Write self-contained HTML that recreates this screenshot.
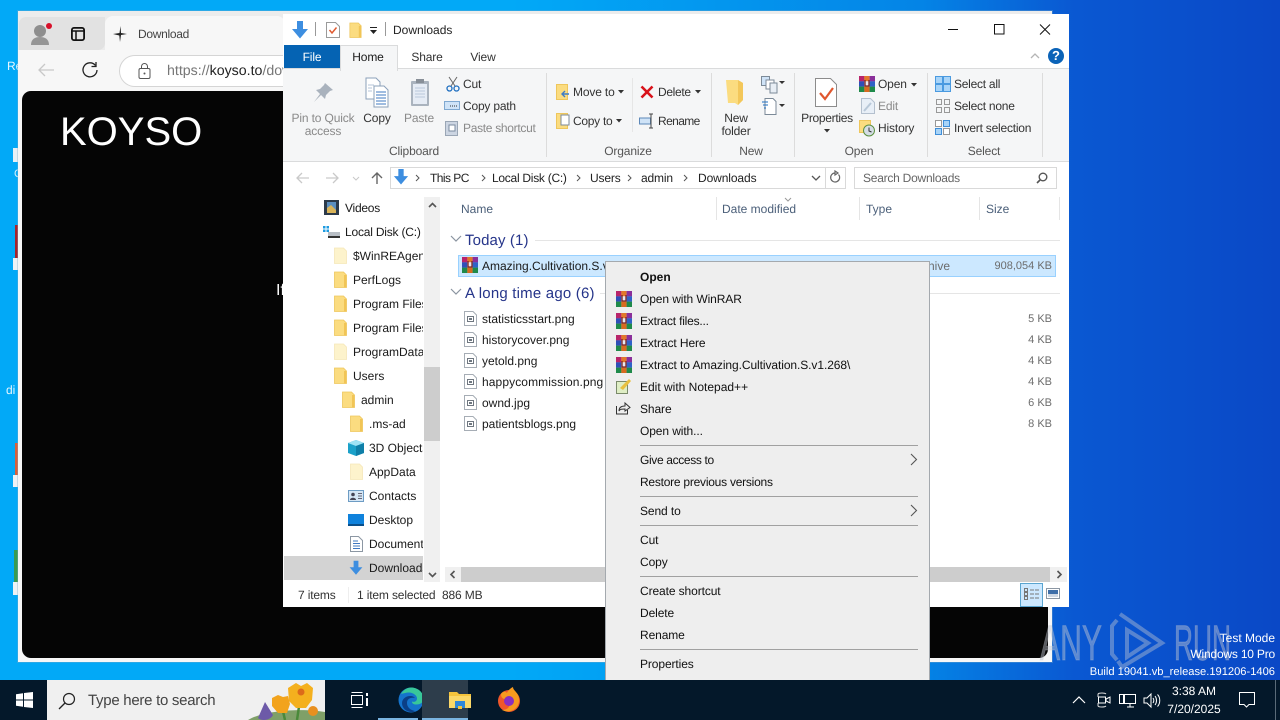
<!DOCTYPE html>
<html><head><meta charset="utf-8"><title>Downloads</title>
<style>
html,body{margin:0;padding:0;width:1280px;height:720px;overflow:hidden}
body{position:relative;background:linear-gradient(90deg,#02a9f7 0%,#02a9f7 40%,#0484e6 72%,#0a58d2 84%,#0a48c6 100%);font:12px/16px "Liberation Sans",sans-serif;color:#1a1a1a;text-rendering:geometricPrecision}
.a{position:absolute}
.t{position:absolute;white-space:nowrap;line-height:16px;font-size:12px;letter-spacing:-.15px}
.f{letter-spacing:0}
.k{font-size:11px;letter-spacing:0}
.c{transform:translateX(-50%)}
.g{color:#8a8a8a}
.r{text-align:right}
svg{position:absolute;overflow:visible}
.sep{position:absolute;background:#dcdcdc;width:1px}
.m{position:absolute;left:640px;white-space:nowrap;color:#111;font-size:12px;letter-spacing:-.1px;line-height:16px}
.ms{position:absolute;left:640px;width:278px;height:1px;background:#a0a0a0}
</style></head><body>
<svg width="0" height="0" style="position:absolute">
<defs>
<symbol id="rar" viewBox="0 0 16 16">
<rect x="0" y="0" width="5.4" height="5.4" fill="#b8246a"/><rect x="5.3" y="0" width="5.4" height="5.4" fill="#e2782a"/><rect x="10.6" y="0" width="5.4" height="5.4" fill="#8a2f9a"/>
<rect x="0" y="5.3" width="5.4" height="5.4" fill="#2f4fb8"/><rect x="5.3" y="5.3" width="5.4" height="5.4" fill="#e8e8f0"/><rect x="10.6" y="5.3" width="5.4" height="5.4" fill="#2f62c8"/>
<rect x="0" y="10.6" width="5.4" height="5.4" fill="#1f8a4a"/><rect x="5.3" y="10.6" width="5.4" height="5.4" fill="#d86a20"/><rect x="10.6" y="10.6" width="5.4" height="5.4" fill="#1f8a4a"/>
<path d="M6 4v6h4V4" fill="none" stroke="#7a2222" stroke-width="1.3"/>
</symbol>
<symbol id="fol" viewBox="0 0 13 17">
<path d="M0.5 1h9l3 3v12.5H.5z" fill="#fbdc80" stroke="#eec65c" stroke-width=".8"/><path d="M10 4v12.5h2.5V4z" fill="#f1c556"/>
</symbol>
<symbol id="fp" viewBox="0 0 13 17">
<path d="M0.5 1h9l3 3v12.5H.5z" fill="#fdf3cc" stroke="#f5e7b8" stroke-width=".8"/>
</symbol>
<symbol id="file" viewBox="0 0 13 15">
<path d="M.5.5h8.5l3.5 3.5v10.500H.5z" fill="#fff" stroke="#a6adb5"/><rect x="3.500" y="5.500" width="6" height="5" fill="#fff" stroke="#6f7780"/><rect x="5" y="7" width="3" height="2" fill="#6f7780"/>
</symbol>
<symbol id="darr" viewBox="0 0 18 20">
<path d="M6 1h6v8h5l-8 9.500L1 9h5z" fill="#3d8ee0"/>
</symbol>
</defs>
</svg>

<!-- desktop left fragments -->
<div class="t f" style="left:7px;top:58px;color:#e6f6ff">Re</div>
<div class="a" style="left:13px;top:148px;width:6px;height:14px;background:#e8f0f5"></div>
<div class="t" style="left:14px;top:166px;color:#d5effc;font-size:11px">C</div>
<div class="a" style="left:15px;top:225px;width:4px;height:35px;background:#a8232a"></div>
<div class="a" style="left:13px;top:258px;width:6px;height:12px;background:#eef2f5"></div>
<div class="t f" style="left:6px;top:382px;color:#e6f6ff">di</div>
<div class="a" style="left:15px;top:443px;width:4px;height:33px;background:#d9603a"></div>
<div class="a" style="left:13px;top:475px;width:6px;height:12px;background:#eef2f5"></div>
<div class="a" style="left:14px;top:550px;width:5px;height:36px;background:#3a9a50"></div>
<div class="a" style="left:13px;top:582px;width:6px;height:13px;background:#eef2f5"></div>

<!-- browser -->
<div class="a" style="left:18px;top:11px;width:1034px;height:651px;background:#f7f7f7;box-shadow:0 0 0 1px rgba(120,170,200,.35)"></div>
<div class="a" style="left:18px;top:11px;width:1034px;height:39px;background:#ececec"></div>
<div class="a" style="left:19px;top:17px;width:86px;height:33px;background:#e2e2e2;border-radius:7px 0 7px 0"></div>
<div class="a" style="left:105px;top:16px;width:180px;height:36px;background:#f7f7f7;border-radius:8px 8px 0 0"></div>
<svg style="left:30px;top:22px" width="22" height="24"><circle cx="10" cy="9" r="6" fill="#8e8e8e"/><path d="M1 23c0-6 4-8 9-8s9 2 9 8z" fill="#969696"/><circle cx="19" cy="4" r="3" fill="#d8102a"/></svg>
<svg style="left:71px;top:27px" width="14" height="14"><rect x=".9" y=".9" width="12.200" height="12.200" rx="2" fill="none" stroke="#111" stroke-width="1.800"/><path d="M1 4h12M5 4v9" stroke="#111" stroke-width="1.500" fill="none"/></svg>
<svg style="left:112px;top:26px" width="16" height="16"><path d="M8.500 0L9 7 15 8 9 9 8 16 7.300 9.500 1 8 7.500 7z" fill="#222"/></svg>
<div class="t" style="left:138px;top:26px;color:#444;letter-spacing:-.3px">Download</div>
<svg style="left:37px;top:62px" width="18" height="16"><path d="M17 8H2M8 2L2 8l6 6" fill="none" stroke="#c8c8c8" stroke-width="1.300"/></svg>
<svg style="left:81px;top:61px" width="18" height="18"><path d="M14.500 4.500A7 7 0 1 0 16 9" fill="none" stroke="#222" stroke-width="1.300"/><path d="M15 1v4.500h-4.500" fill="none" stroke="#222" stroke-width="1.300"/></svg>
<div class="a" style="left:119px;top:55px;width:190px;height:30px;background:#fff;border:1px solid #d5d5d5;border-radius:16px"></div>
<svg style="left:138px;top:63px" width="13" height="16"><rect x="1" y="5.500" width="11" height="10" rx="1.500" fill="none" stroke="#555"/><path d="M3.500 5.500V3.500a3 3 0 0 1 6 0v2" fill="none" stroke="#555"/><circle cx="6.500" cy="10.500" r="1" fill="#555"/></svg>
<div class="t f" style="left:167px;top:63px;color:#777;font-size:14.200px">https://<span style="color:#222">koyso.to</span>/download</div>
<div class="a" style="left:22px;top:91px;width:1026px;height:567px;background:#050505;border-radius:9px"></div>
<div class="t f" style="left:60px;top:112px;color:#fff;font-size:40px;line-height:40px">KOYSO</div>
<div class="t f" style="left:276px;top:283px;color:#fff;font-size:16px">If</div>

<!-- watermark -->
<svg style="left:1030px;top:605px" width="220" height="75">
<g fill="#c4c8d2" fill-opacity=".45" stroke="#c4c8d2" stroke-opacity=".3" stroke-width="1">
<text x="10" y="55" font-family="Liberation Sans" font-size="50" textLength="62" lengthAdjust="spacingAndGlyphs">ANY</text>
<text x="144" y="55" font-family="Liberation Sans" font-size="50" textLength="57" lengthAdjust="spacingAndGlyphs">RUN</text>
</g>
<g fill="none" stroke="#c4c8d2" stroke-opacity=".42" stroke-width="4">
<path d="M90 9L132 38 92 62 88 56"/>
<path d="M97 25L118 38 97 52Z"/>
<path d="M87 15L82 21V49L87 55"/>
</g>
</svg>
<div class="t r f" style="right:5px;top:630px;color:#fff">Test Mode</div>
<div class="t r" style="right:5px;top:646px;color:#fff;letter-spacing:-.2px">Windows 10 Pro</div>
<div class="t r f" style="right:5px;top:664px;color:#fff;font-size:11.150px">Build 19041.vb_release.191206-1406</div>

<!-- explorer -->
<div class="a" style="left:283px;top:14px;width:786px;height:593px;background:#fff"></div>
<svg style="left:291px;top:20px" width="18" height="20"><use href="#darr" width="18" height="20"/></svg>
<div class="sep" style="left:315px;top:22px;height:14px;background:#999"></div>
<svg style="left:326px;top:22px" width="14" height="16"><path d="M.5.500h9l4 4v11H.5z" fill="#fff" stroke="#9a9a9a"/><path d="M3.500 8l2.500 3 4.500-5.500" fill="none" stroke="#e05a30" stroke-width="1.500"/></svg>
<svg style="left:349px;top:22px" width="13" height="16"><use href="#fol" width="13" height="16"/></svg>
<svg style="left:369px;top:27px" width="9" height="8"><path d="M1 .5h7" stroke="#222"/><path d="M1 3h7L4.500 7z" fill="#222"/></svg>
<div class="sep" style="left:385px;top:22px;height:14px;background:#999"></div>
<div class="t f" style="left:393px;top:22px;color:#222">Downloads</div>
<svg style="left:948px;top:24px" width="102" height="12"><path d="M0 5.500h10" stroke="#111"/><rect x="46.500" y=".5" width="9.500" height="9.500" fill="none" stroke="#111"/><path d="M92 .5l10 10M102 .5l-10 10" stroke="#111"/></svg>

<div class="a" style="left:284px;top:45px;width:56px;height:23px;background:#0563b3"></div>
<div class="t c" style="left:312px;top:49px;color:#fff">File</div>
<div class="a" style="left:283px;top:68px;width:786px;height:92px;background:#f5f6f7;border-top:1px solid #dadbdc;border-bottom:1px solid #dadbdc;box-sizing:content-box"></div>
<div class="a" style="left:340px;top:45px;width:56px;height:25px;background:#f5f6f7;border:1px solid #dadbdc;border-bottom:0"></div>
<div class="t c" style="left:368px;top:49px">Home</div>
<div class="t c" style="left:427px;top:49px;color:#333">Share</div>
<div class="t c" style="left:483px;top:49px;color:#333">View</div>
<svg style="left:1030px;top:52px" width="10" height="7"><path d="M1 6l4-4 4 4" fill="none" stroke="#b5b5b5" stroke-width="1.300"/></svg>
<div class="a" style="left:1048px;top:48px;width:16px;height:16px;border-radius:50%;background:#0b63b8;color:#fff;font:bold 13px/16px 'Liberation Sans';text-align:center">?</div>

<!-- ribbon separators -->
<div class="sep" style="left:546px;top:73px;height:84px"></div><div class="sep" style="left:711px;top:73px;height:84px"></div><div class="sep" style="left:794px;top:73px;height:84px"></div><div class="sep" style="left:927px;top:73px;height:84px"></div><div class="sep" style="left:1042px;top:73px;height:84px"></div><div class="sep" style="left:632px;top:78px;height:54px;background:#e6e6e6"></div>

<!-- clipboard -->
<svg style="left:312px;top:82px" width="22" height="22"><path d="M13 1l8 7-3 1-4 4-1 4-4-4-7 7 6-8-4-4 4-1 4-4z" fill="#a9b2bd"/></svg>
<svg style="left:365px;top:77px" width="26" height="32"><path d="M1 1h10l4 4v17H1z" fill="#fff" stroke="#8ba0ba"/><path d="M9 9h10l4 4v17H9z" fill="#fff" stroke="#8ba0ba"/><path d="M11 15h10M11 18h10M11 21h10M11 24h10M11 27h10" stroke="#3f78c2"/><path d="M3 8h6M3 11h4M3 14h4" stroke="#b5c4d8"/></svg>
<svg style="left:410px;top:77px" width="20" height="30"><rect x="1" y="4" width="18" height="25" rx="1" fill="#aab3be"/><rect x="3" y="7" width="14" height="20" fill="#e6ecf5"/><path d="M5 11h10M5 14h10M5 17h10M5 20h10" stroke="#bac8dc"/><rect x="6" y="2" width="8" height="4" fill="#888f98"/></svg>
<div class="t c g" style="left:323px;top:110px">Pin to Quick</div>
<div class="t c g" style="left:323px;top:123px">access</div>
<div class="t c" style="left:377px;top:110px;color:#333">Copy</div>
<div class="t c g" style="left:419px;top:110px">Paste</div>
<svg style="left:446px;top:76px" width="14" height="16"><path d="M3 1l6 9M11 1L5 10" stroke="#666" fill="none"/><circle cx="3.500" cy="12.500" r="2.500" fill="none" stroke="#1f6fc0" stroke-width="1.300"/><circle cx="10.500" cy="12.500" r="2.500" fill="none" stroke="#1f6fc0" stroke-width="1.300"/></svg>
<svg style="left:444px;top:101px" width="16" height="10"><rect x=".5" y=".5" width="15" height="8" fill="#cfe3f7" stroke="#7fa8d0"/><path d="M6 5h1M8 5h1M10 5h1M12 5h1" stroke="#333"/></svg>
<svg style="left:445px;top:120px" width="13" height="16"><rect x=".5" y="1.500" width="12" height="14" fill="#ccd5e2" stroke="#9aa6b5"/><rect x="4" y="5" width="6" height="6" fill="#fff" stroke="#7a8ba0"/></svg>
<div class="t" style="left:463px;top:76px;color:#333">Cut</div>
<div class="t" style="left:463px;top:98px;color:#333;letter-spacing:-.2px">Copy path</div>
<div class="t g" style="left:463px;top:120px;letter-spacing:-.3px">Paste shortcut</div>
<div class="t c" style="left:414px;top:143px;color:#555">Clipboard</div>

<!-- organize -->
<svg style="left:556px;top:84px" width="14" height="16"><rect x=".5" y=".5" width="11" height="15" fill="#fbdc80" stroke="#eec65c"/><path d="M13 10H6M9 7l-3 3 3 3" stroke="#3d7cc8" fill="none" stroke-width="1.400"/></svg>
<svg style="left:556px;top:113px" width="14" height="16"><rect x=".5" y=".5" width="11" height="15" fill="#fbdc80" stroke="#eec65c"/><rect x="5" y="2" width="8" height="10" fill="#fff" stroke="#7c8a98"/></svg>
<div class="t" style="left:573px;top:84px;color:#333">Move to</div>
<div class="t" style="left:573px;top:113px;color:#333;letter-spacing:-.28px">Copy to</div>
<svg style="left:618px;top:90px" width="7" height="4"><path d="M0 0h6L3 3.500z" fill="#333"/></svg>
<svg style="left:616px;top:119px" width="7" height="4"><path d="M0 0h6L3 3.500z" fill="#333"/></svg>
<svg style="left:640px;top:85px" width="14" height="14"><path d="M1.500 1.500l11 11M12.500 1.500l-11 11" stroke="#d8121a" stroke-width="2.600"/></svg>
<svg style="left:639px;top:113px" width="16" height="16"><rect x=".5" y="5" width="11" height="6" fill="#cfe3f7" stroke="#5d88b8"/><path d="M12 1v14M10 1h4M10 15h4" stroke="#444"/></svg>
<div class="t" style="left:658px;top:84px;color:#333;letter-spacing:-.33px">Delete</div>
<div class="t" style="left:658px;top:113px;color:#333;letter-spacing:-.6px">Rename</div>
<svg style="left:695px;top:90px" width="7" height="4"><path d="M0 0h6L3 3.500z" fill="#333"/></svg>
<div class="t c" style="left:628px;top:143px;color:#555">Organize</div>

<!-- new -->
<svg style="left:725px;top:79px" width="20" height="28"><path d="M1 1h12l5 3v17l-5 5-3-2H3z" fill="#fbdc80"/><path d="M13 1l5 3v17l-5 5z" fill="#f3c75a"/></svg>
<svg style="left:761px;top:76px" width="24" height="18"><rect x=".5" y=".5" width="8" height="9" fill="#cfe3f7" stroke="#7c8a98"/><rect x="5" y="4" width="8" height="9" fill="#fff" stroke="#7c8a98"/><rect x="9" y="7" width="7" height="10" fill="#e8eef5" stroke="#7c8a98"/><path d="M18 5h6l-3 3z" fill="#333"/></svg>
<svg style="left:761px;top:98px" width="24" height="17"><path d="M4 .5h8l3 3v13H4z" fill="#fff" stroke="#7c8a98"/><path d="M1 4h6M2 7h5M3 10h2" stroke="#1f6fc0"/><path d="M18 6h6l-3 3z" fill="#333"/></svg>
<div class="t c" style="left:736px;top:110px;color:#333">New</div>
<div class="t c" style="left:736px;top:123px;color:#333">folder</div>
<div class="t c" style="left:751px;top:143px;color:#555">New</div>

<!-- open -->
<svg style="left:815px;top:78px" width="22" height="29"><path d="M.5.500h15l6 6v22H.5z" fill="#fff" stroke="#8c8c8c"/><path d="M5 15l5 6 8-11" fill="none" stroke="#e0572e" stroke-width="2.200"/></svg>
<div class="t c" style="left:827px;top:110px;color:#333;letter-spacing:-.3px">Properties</div>
<svg style="left:824px;top:129px" width="7" height="4"><path d="M0 0h6L3 3.500z" fill="#333"/></svg>
<svg style="left:859px;top:76px" width="16" height="16"><use href="#rar" width="16" height="16"/></svg>
<svg style="left:861px;top:98px" width="14" height="16"><path d="M.5.500h9l4 4v11H.5z" fill="#e8eff7" stroke="#b4c0ce"/><path d="M3 13l7-8" stroke="#b8c8d8" stroke-width="2"/></svg>
<svg style="left:859px;top:120px" width="16" height="16"><rect x=".5" y=".5" width="11" height="12" fill="#fbdc80" stroke="#eec65c"/><circle cx="10" cy="10.500" r="5.500" fill="#d4dde5" stroke="#5b8f40"/><path d="M10 7.500V11l2.500 1" stroke="#333" fill="none"/></svg>
<div class="t" style="left:878px;top:76px;color:#333">Open</div>
<div class="t g" style="left:878px;top:98px">Edit</div>
<div class="t" style="left:878px;top:120px;color:#333">History</div>
<svg style="left:911px;top:83px" width="7" height="4"><path d="M0 0h6L3 3.500z" fill="#333"/></svg>
<div class="t c" style="left:859px;top:143px;color:#555">Open</div>

<!-- select -->
<svg style="left:935px;top:76px" width="16" height="16"><rect width="16" height="16" fill="#4a9ae0"/><rect x="1" y="1" width="6" height="6" fill="#a8d4f8"/><rect x="9" y="1" width="6" height="6" fill="#a8d4f8"/><rect x="1" y="9" width="6" height="6" fill="#a8d4f8"/><rect x="9" y="9" width="6" height="6" fill="#a8d4f8"/></svg>
<svg style="left:936px;top:99px" width="14" height="14"><g fill="none" stroke="#999"><rect x=".5" y=".5" width="5" height="5"/><rect x="8.500" y=".5" width="5" height="5"/><rect x=".5" y="8.500" width="5" height="5"/><rect x="8.500" y="8.500" width="5" height="5"/></g></svg>
<svg style="left:935px;top:120px" width="16" height="16"><g stroke="#3f8ed8"><rect x=".5" y="8.500" width="6" height="6" fill="#a8d4f8"/><rect x="8.500" y=".5" width="6" height="6" fill="#a8d4f8"/></g><g stroke="#999" fill="#fff"><rect x=".5" y=".5" width="6" height="6"/><rect x="8.500" y="8.500" width="6" height="6"/></g></svg>
<div class="t" style="left:954px;top:76px;color:#333;letter-spacing:-.25px">Select all</div>
<div class="t" style="left:954px;top:98px;color:#333;letter-spacing:-.25px">Select none</div>
<div class="t" style="left:954px;top:120px;color:#333;letter-spacing:-.22px">Invert selection</div>
<div class="t c" style="left:984px;top:143px;color:#555">Select</div>

<!-- address row -->
<svg style="left:296px;top:172px" width="70" height="12"><path d="M13 6H1M6 1L1 6l5 5" fill="none" stroke="#c9c9c9" stroke-width="1.300"/><path d="M30 6h12M37 1l5 5-5 5" fill="none" stroke="#c9c9c9" stroke-width="1.300"/><path d="M57 5l3 3 3-3" fill="none" stroke="#c9c9c9"/></svg>
<svg style="left:371px;top:172px" width="12" height="13"><path d="M6 12V1M1 6l5-5 5 5" fill="none" stroke="#666" stroke-width="1.400"/></svg>
<div class="a" style="left:390px;top:167px;width:454px;height:20px;border:1px solid #d9d9d9;background:#fff"></div>
<div class="a" style="left:825px;top:167px;width:1px;height:21px;background:#d9d9d9"></div>
<svg style="left:393px;top:168px" width="16" height="18"><use href="#darr" width="16" height="18"/></svg>
<svg style="left:415px;top:174px" width="280" height="8"><g fill="none" stroke="#555"><path d="M1 1l3 3-3 3M67 1l3 3-3 3M162 1l3 3-3 3M213 1l3 3-3 3M269 1l3 3-3 3"/></g></svg>
<div class="t" style="left:430px;top:170px;color:#222;letter-spacing:-.55px">This PC</div>
<div class="t" style="left:492px;top:170px;color:#222;letter-spacing:-.27px">Local Disk (C:)</div>
<div class="t" style="left:590px;top:170px;color:#222">Users</div>
<div class="t" style="left:641px;top:170px;color:#222">admin</div>
<div class="t" style="left:698px;top:170px;color:#222;letter-spacing:-.1px">Downloads</div>
<svg style="left:811px;top:175px" width="10" height="7"><path d="M1 1l4 4 4-4" fill="none" stroke="#555" stroke-width="1.300"/></svg>
<svg style="left:829px;top:171px" width="12" height="13"><path d="M9.500 3.500a4.500 4.500 0 1 1-3.500-1.500M6 0v4l3-2z" fill="none" stroke="#666" stroke-width="1.200"/></svg>
<div class="a" style="left:854px;top:167px;width:201px;height:20px;border:1px solid #d9d9d9;background:#fff"></div>
<div class="t" style="left:863px;top:170px;color:#666;letter-spacing:-.24px">Search Downloads</div>
<svg style="left:1036px;top:172px" width="12" height="12"><circle cx="7" cy="5" r="3.800" fill="none" stroke="#555" stroke-width="1.400"/><path d="M4 8l-3 3" stroke="#555" stroke-width="1.600"/></svg>

<!-- tree -->
<div class="a" style="left:284px;top:556px;width:139px;height:24px;background:#d3d3d3"></div>
<svg style="left:324px;top:200px" width="15" height="15"><rect width="15" height="15" fill="#2c3a4a"/><rect x="3" y="2" width="9" height="11" fill="#5b8fc0"/><path d="M3 8l4-3 5 5v3H3z" fill="#d9b45a"/></svg>
<svg style="left:323px;top:225px" width="17" height="14"><rect x="5" y="7" width="12" height="6" fill="#b8bec5"/><rect x="5" y="11" width="12" height="2" fill="#333"/><g fill="#1e9be0"><rect x="0" y="1" width="2.500" height="2.500"/><rect x="3.500" y="1" width="2.500" height="2.500"/><rect x="0" y="4.500" width="2.500" height="2.500"/><rect x="3.500" y="4.500" width="2.500" height="2.500"/></g></svg>
<div class="t" style="left:345px;top:200px;letter-spacing:-.25px">Videos</div>
<div class="t" style="left:345px;top:224px;letter-spacing:-.2px">Local Disk (C:)</div>
<svg style="left:334px;top:247px" width="13" height="17"><use href="#fp" width="13" height="17"/></svg>
<svg style="left:334px;top:271px" width="13" height="17"><use href="#fol" width="13" height="17"/></svg>
<svg style="left:334px;top:295px" width="13" height="17"><use href="#fol" width="13" height="17"/></svg>
<svg style="left:334px;top:319px" width="13" height="17"><use href="#fol" width="13" height="17"/></svg>
<svg style="left:334px;top:343px" width="13" height="17"><use href="#fp" width="13" height="17"/></svg>
<svg style="left:334px;top:367px" width="13" height="17"><use href="#fol" width="13" height="17"/></svg>
<svg style="left:342px;top:391px" width="13" height="17"><use href="#fol" width="13" height="17"/></svg>
<svg style="left:350px;top:415px" width="13" height="17"><use href="#fol" width="13" height="17"/></svg>
<svg style="left:348px;top:440px" width="16" height="16"><path d="M8 0l8 3v10l-8 3-8-3V3z" fill="#1ba1c9"/><path d="M8 0L0 3l8 3 8-3z" fill="#9fe3f5"/><path d="M8 6v10l8-3V3z" fill="#0f7fa8"/></svg>
<svg style="left:350px;top:463px" width="13" height="17"><use href="#fp" width="13" height="17"/></svg>
<svg style="left:348px;top:490px" width="16" height="12"><rect x=".5" y=".5" width="15" height="11" fill="#d5e6f5" stroke="#6d9cc4"/><circle cx="5" cy="4.500" r="1.800" fill="#445"/><path d="M2 10c0-3 6-3 6 0z" fill="#445"/><path d="M10 3.500h4M10 6h4M10 8.500h4" stroke="#667"/></svg>
<svg style="left:348px;top:514px" width="16" height="12"><rect width="16" height="12" fill="#0f82dc"/><rect y="10" width="16" height="2" fill="#0a4f8a"/></svg>
<svg style="left:350px;top:536px" width="13" height="16"><path d="M.5.500h8l4 4v11H.5z" fill="#fff" stroke="#8c97a3"/><path d="M3 5h5M3 7.500h7M3 10h7M3 12.500h7" stroke="#3f78c2"/></svg>
<svg style="left:348px;top:560px" width="16" height="16"><use href="#darr" width="16" height="16"/></svg>
<div class="a" style="left:284px;top:244px;width:139px;height:340px;overflow:hidden">
<div class="t f" style="left:69px;top:4px">$WinREAgent</div>
<div class="t f" style="left:69px;top:28px">PerfLogs</div>
<div class="t f" style="left:69px;top:52px">Program Files</div>
<div class="t f" style="left:69px;top:76px">Program Files</div>
<div class="t f" style="left:69px;top:100px">ProgramData</div>
<div class="t f" style="left:69px;top:124px">Users</div>
<div class="t f" style="left:77px;top:148px">admin</div>
<div class="t f" style="left:85px;top:172px">.ms-ad</div>
<div class="t f" style="left:85px;top:196px">3D Objects</div>
<div class="t f" style="left:85px;top:220px">AppData</div>
<div class="t f" style="left:85px;top:244px">Contacts</div>
<div class="t f" style="left:85px;top:268px">Desktop</div>
<div class="t f" style="left:85px;top:292px">Documents</div>
<div class="t f" style="left:85px;top:316px">Downloads</div>
</div>
<div class="a" style="left:424px;top:197px;width:16px;height:385px;background:#f0f0f0"></div>
<div class="a" style="left:424px;top:367px;width:16px;height:74px;background:#cdcdcd"></div>
<svg style="left:428px;top:202px" width="9" height="6"><path d="M1 5l3.500-3.500L8 5" fill="none" stroke="#555" stroke-width="1.600"/></svg>
<svg style="left:428px;top:572px" width="9" height="6"><path d="M1 1l3.500 3.500L8 1" fill="none" stroke="#555" stroke-width="1.600"/></svg>

<!-- columns -->
<div class="t f" style="left:461px;top:201px;color:#4c607a">Name</div>
<div class="t f" style="left:722px;top:201px;color:#4c607a">Date modified</div>
<div class="t f" style="left:866px;top:201px;color:#4c607a">Type</div>
<div class="t f" style="left:986px;top:201px;color:#4c607a">Size</div>
<div class="sep" style="left:716px;top:197px;height:23px;background:#e5e5e5"></div><div class="sep" style="left:859px;top:197px;height:23px;background:#e5e5e5"></div><div class="sep" style="left:979px;top:197px;height:23px;background:#e5e5e5"></div><div class="sep" style="left:1059px;top:197px;height:23px;background:#e5e5e5"></div>
<svg style="left:784px;top:197px" width="8" height="5"><path d="M1 1l3 3 3-3" fill="none" stroke="#999"/></svg>

<!-- groups -->
<svg style="left:450px;top:235px" width="12" height="8"><path d="M1 1l5 5 5-5" fill="none" stroke="#8a94a0" stroke-width="1.200"/></svg>
<div class="t" style="left:465px;top:233px;color:#26358a;font-size:15px;letter-spacing:.12px">Today (1)</div>
<div class="a" style="left:535px;top:240px;width:525px;height:1px;background:#e5e5e5"></div>
<div class="a" style="left:458px;top:255px;width:596px;height:20px;background:#cce8ff;border:1px solid #99d1ff"></div>
<svg style="left:462px;top:257px" width="16" height="16"><use href="#rar" width="16" height="16"/></svg>
<div class="t f" style="left:482px;top:258px">Amazing.Cultivation.S.v1.268.rar</div>
<div class="t f" style="left:928px;top:258px;color:#6d6d6d;background:#cce8ff">hive</div>
<div class="t r k" style="right:228px;top:258px;color:#6d6d6d;background:#cce8ff">908,054 KB</div>
<svg style="left:450px;top:288px" width="12" height="8"><path d="M1 1l5 5 5-5" fill="none" stroke="#8a94a0" stroke-width="1.200"/></svg>
<div class="t" style="left:465px;top:286px;color:#26358a;font-size:15px;letter-spacing:.2px">A long time ago (6)</div>
<div class="a" style="left:600px;top:293px;width:460px;height:1px;background:#e5e5e5"></div>

<svg style="left:464px;top:311px" width="13" height="15"><use href="#file" width="13" height="15"/></svg>
<svg style="left:464px;top:332px" width="13" height="15"><use href="#file" width="13" height="15"/></svg>
<svg style="left:464px;top:353px" width="13" height="15"><use href="#file" width="13" height="15"/></svg>
<svg style="left:464px;top:374px" width="13" height="15"><use href="#file" width="13" height="15"/></svg>
<svg style="left:464px;top:395px" width="13" height="15"><use href="#file" width="13" height="15"/></svg>
<svg style="left:464px;top:416px" width="13" height="15"><use href="#file" width="13" height="15"/></svg>
<div class="t f" style="left:482px;top:311px">statisticsstart.png</div>
<div class="t f" style="left:482px;top:332px">historycover.png</div>
<div class="t f" style="left:482px;top:353px">yetold.png</div>
<div class="t f" style="left:482px;top:374px;letter-spacing:.1px">happycommission.png</div>
<div class="t f" style="left:482px;top:395px">ownd.jpg</div>
<div class="t f" style="left:482px;top:416px">patientsblogs.png</div>
<div class="t r k" style="right:228px;top:311px;color:#6d6d6d">5 KB</div>
<div class="t r k" style="right:228px;top:332px;color:#6d6d6d">4 KB</div>
<div class="t r k" style="right:228px;top:353px;color:#6d6d6d">4 KB</div>
<div class="t r k" style="right:228px;top:374px;color:#6d6d6d">4 KB</div>
<div class="t r k" style="right:228px;top:395px;color:#6d6d6d">6 KB</div>
<div class="t r k" style="right:228px;top:416px;color:#6d6d6d">8 KB</div>

<!-- hscroll -->
<div class="a" style="left:445px;top:567px;width:622px;height:15px;background:#f0f0f0"></div>
<div class="a" style="left:461px;top:567px;width:589px;height:15px;background:#cdcdcd"></div>
<svg style="left:449px;top:570px" width="7" height="9"><path d="M5.500 1L2 4.500 5.500 8" fill="none" stroke="#555" stroke-width="1.600"/></svg>
<svg style="left:1056px;top:570px" width="7" height="9"><path d="M1.500 1L5 4.500 1.500 8" fill="none" stroke="#555" stroke-width="1.600"/></svg>

<!-- status -->
<div class="t" style="left:298px;top:587px;color:#333">7 items</div>
<div class="sep" style="left:348px;top:587px;height:16px;background:#eee"></div>
<div class="t" style="left:357px;top:587px;color:#333">1 item selected</div>
<div class="t" style="left:442px;top:587px;color:#333">886 MB</div>
<div class="a" style="left:1020px;top:583px;width:21px;height:22px;background:#cce8ff;border:1px solid #5aa5d0"></div>
<svg style="left:1024px;top:588px" width="17" height="13"><g fill="none" stroke="#777"><rect x=".5" y=".5" width="3" height="3"/><rect x=".5" y="4.500" width="3" height="3"/><rect x=".5" y="8.500" width="3" height="3"/></g><path d="M6 2h10M6 6h10M6 10h10" stroke="#777" stroke-dasharray="4 1"/></svg>
<svg style="left:1046px;top:588px" width="14" height="12"><rect x=".5" y=".5" width="13" height="10" fill="#fff" stroke="#8c97a3"/><rect x="2" y="2" width="10" height="7" fill="#3f6fa8"/><rect x="2" y="6" width="10" height="3" fill="#cfd8e3"/></svg>

<!-- context menu -->
<div class="a" style="left:605px;top:261px;width:323px;height:419px;background:#eeeeee;border:1px solid #a4a9ae;border-bottom:0;box-sizing:content-box"></div>
<div class="m" style="top:269px;font-weight:bold;letter-spacing:0">Open</div>
<svg style="left:616px;top:291px" width="16" height="16"><use href="#rar" width="16" height="16"/></svg>
<svg style="left:616px;top:313px" width="16" height="16"><use href="#rar" width="16" height="16"/></svg>
<svg style="left:616px;top:335px" width="16" height="16"><use href="#rar" width="16" height="16"/></svg>
<svg style="left:616px;top:357px" width="16" height="16"><use href="#rar" width="16" height="16"/></svg>
<svg style="left:616px;top:378px" width="16" height="16"><rect x=".5" y="3.500" width="11" height="12" fill="#dfeec5" stroke="#7a8a6a"/><path d="M4 10l9-9 2 2-8 9z" fill="#e8c040"/></svg>
<svg style="left:616px;top:401px" width="15" height="14"><path d="M.5 5v8h11V9" fill="none" stroke="#333"/><path d="M3 10c0-4 3-5 6-5V2l5 4.500L9 10V8C6 8 4 8 3 10z" fill="none" stroke="#333"/></svg>
<div class="m" style="top:291px">Open with WinRAR</div>
<div class="m" style="top:313px;letter-spacing:-.2px">Extract files...</div>
<div class="m" style="top:335px">Extract Here</div>
<div class="m" style="top:357px;letter-spacing:-.08px">Extract to Amazing.Cultivation.S.v1.268\</div>
<div class="m" style="top:379px;letter-spacing:0">Edit with Notepad++</div>
<div class="m" style="top:401px">Share</div>
<div class="m" style="top:423px">Open with...</div>
<div class="ms" style="top:445px"></div>
<div class="m" style="top:452px;letter-spacing:-.35px">Give access to</div>
<svg style="left:910px;top:453px" width="8" height="13"><path d="M1 1l5.500 5.500L1 12" fill="none" stroke="#555" stroke-width="1.100"/></svg>
<div class="m" style="top:474px;letter-spacing:-.24px">Restore previous versions</div>
<div class="ms" style="top:496px"></div>
<div class="m" style="top:503px">Send to</div>
<svg style="left:910px;top:504px" width="8" height="13"><path d="M1 1l5.500 5.500L1 12" fill="none" stroke="#555" stroke-width="1.100"/></svg>
<div class="ms" style="top:525px"></div>
<div class="m" style="top:532px">Cut</div>
<div class="m" style="top:554px">Copy</div>
<div class="ms" style="top:576px"></div>
<div class="m" style="top:583px">Create shortcut</div>
<div class="m" style="top:605px">Delete</div>
<div class="m" style="top:627px">Rename</div>
<div class="ms" style="top:649px"></div>
<div class="m" style="top:656px">Properties</div>

<!-- taskbar -->
<div class="a" style="left:0;top:680px;width:1280px;height:40px;background:#04182a"></div>
<svg style="left:16px;top:692px" width="17" height="16"><path d="M0 2.200L7 1.200V7.500H0zM8 1L17 0V7.500H8zM0 8.500H7V14.800L0 13.800zM8 8.500H17V16L8 15z" fill="#fff"/></svg>
<div class="a" style="left:47px;top:680px;width:278px;height:40px;background:#f0f0f0"></div>
<svg style="left:58px;top:692px" width="18" height="18"><circle cx="11" cy="7" r="5.500" fill="none" stroke="#222" stroke-width="1.200"/><path d="M7 11l-6 6" stroke="#222" stroke-width="1.300"/></svg>
<div class="t f" style="left:88px;top:693px;color:#444;font-size:15px;letter-spacing:-.28px">Type here to search</div>
<svg style="left:248px;top:680px" width="77" height="40"><path d="M0 40c16-10 56-12 77-8v8z" fill="#7fa068"/><path d="M10 38l7-16 8 13c-3 6-12 6-15 3z" fill="#6d5aa8"/><path d="M52 20l-3 20M34 27l3 13" stroke="#4a8a3a" stroke-width="2.500"/><path d="M40 8l8-5 5 3 6-3 6 5-1 12-6 8H48l-7-7z" fill="#f4b01e"/><path d="M24 18l6-3 5 2 5-1 2 8-3 9h-9l-6-7z" fill="#f2a31c"/><circle cx="65" cy="31" r="5" fill="#e89020"/><circle cx="53" cy="12" r="3.500" fill="#dc6a1a"/></svg>
<svg style="left:351px;top:692px" width="18" height="16"><g fill="none" stroke="#fff"><path d="M.5.500h11M.5 15.500h11"/><rect x=".5" y="3.500" width="11" height="9"/></g><rect x="15" y="1" width="2" height="3" fill="#fff"/><rect x="15" y="6" width="2" height="8" fill="#fff"/></svg>
<svg style="left:398px;top:687px" width="26" height="26"><circle cx="13" cy="13" r="12.500" fill="#1574cc"/><path d="M3 7C6 2 10 .5 13 .5c7 0 12.500 5 12.500 11 0 4-3 6-7 6-3 0-4.500-1-4.500-3 2 1 5 0 5-3 0-3-4-6-8-6-3 0-6 1-8 1.500z" fill="#38c79a"/><path d="M14 25c-6 0-10-4-10-9 0-4 4-7 8-7 3 0 4 1 5 2-6-1-8 2-8 5 0 4 3 7 8 8-1 1-2 1-3 1z" fill="#0b3f86"/></svg>
<div class="a" style="left:378px;top:718px;width:40px;height:2px;background:#7ab4e0"></div>
<div class="a" style="left:422px;top:680px;width:46px;height:40px;background:#2d3d4b"></div>
<div class="a" style="left:422px;top:718px;width:46px;height:2px;background:#7ab4e0"></div>
<svg style="left:449px;top:690px" width="22" height="20"><path d="M0 2h8l2 2h12v14H0z" fill="#f5c43c"/><rect y="6" width="22" height="12" fill="#fbd868"/><rect x="6" y="11" width="10" height="7" fill="#2f87d8"/><rect x="9" y="16" width="4" height="3" fill="#f5c43c"/></svg>
<svg style="left:497px;top:687px" width="24" height="26"><circle cx="12" cy="14" r="11" fill="#f0572a"/><path d="M4 7c2-3 4-3 6-1 1-3 4-5 6-6 0 3 3 4 5 8 2 5 1 10-2 13-4 4-10 4-14 2 4 0 8-2 8-7 0-3-3-5-6-4-2-1-3-2-3-5z" fill="#f79a1e"/><circle cx="12" cy="14" r="5" fill="#8a2fc0"/></svg>
<svg style="left:1072px;top:695px" width="14" height="9"><path d="M1 8l6-6 6 6" fill="none" stroke="#fff" stroke-width="1.200"/></svg>
<svg style="left:1097px;top:692px" width="14" height="16"><path d="M1 5V2.500C1 1 3 1 5 1s3 0 4 1M1 11v2.500c0 1.500 2 1.500 4 1.500s3 0 4-1" fill="none" stroke="#ddd"/><rect x="1.500" y="5" width="7" height="6" fill="none" stroke="#fff"/><path d="M9 7l4-2v6l-4-2z" fill="none" stroke="#fff"/></svg>
<svg style="left:1119px;top:693px" width="17" height="15"><g fill="none" stroke="#fff"><rect x="5.500" y="1.500" width="11" height="9"/><rect x=".5" y="1.500" width="4" height="9" fill="#04182a"/><path d="M8 14h7M11 10.500V14"/></g></svg>
<svg style="left:1143px;top:693px" width="17" height="15"><g fill="none" stroke="#fff"><path d="M1 5h3l4-4v13l-4-4H1z"/><path d="M10 5c1 1.500 1 3.500 0 5M12 3c2 2.500 2 6.500 0 9M14.500 1.500c3 3 3 9 0 12"/></g></svg>
<div class="t c f" style="left:1194px;top:683px;color:#fff">3:38 AM</div>
<div class="t c f" style="left:1194px;top:701px;color:#fff">7/20/2025</div>
<svg style="left:1239px;top:692px" width="17" height="16"><path d="M.5.500h15v12H10l-2.500 2.500L5 12.500H.5z" fill="none" stroke="#fff"/></svg>
<div class="a" style="left:1275px;top:680px;width:1px;height:40px;background:#5a6a78"></div>
</body></html>
